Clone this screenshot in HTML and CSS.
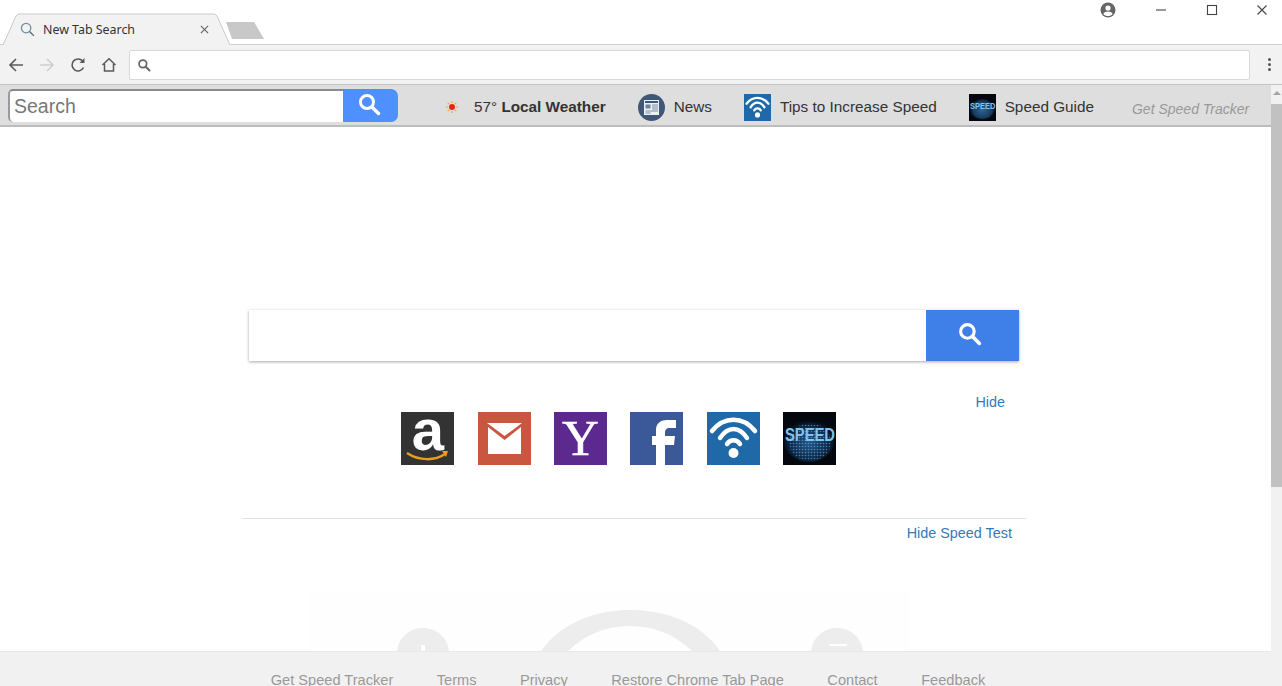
FILE: index.html
```html
<!DOCTYPE html>
<html lang="en">

<head>
  <meta charset="UTF-8">
  <meta name="viewport" content="width=device-width, initial-scale=1.0">
  <title>New Tab Search</title>
  <link rel="stylesheet" href="styles.css">
</head>

<body>
  <svg class="sprite" aria-hidden="true">
    <defs>
      <radialGradient id="speedglow" cx="50%" cy="55%" r="55%">
        <stop offset="0%" stop-color="#24598c" />
        <stop offset="65%" stop-color="#0f2c4d" />
        <stop offset="100%" stop-color="#03070f" />
      </radialGradient>
      <pattern id="speeddots" width="3" height="3" patternUnits="userSpaceOnUse">
        <circle cx="1.500" cy="1.500" r=".8" fill="#5fa3d8" />
      </pattern>
    </defs>
    <symbol id="lens" viewBox="0 0 24 24">
      <circle cx="10" cy="10" r="6.500" fill="none" stroke="currentColor" stroke-width="3" />
      <path d="M15 15l6.500 6.500" fill="none" stroke="currentColor" stroke-width="3.400" stroke-linecap="round" />
    </symbol>
    <symbol id="wifi" viewBox="0 0 53 53">
      <rect width="53" height="53" fill="#1f69a9" />
      <g fill="none" stroke="#fff" stroke-width="4.500" stroke-linecap="round">
        <path d="M5 19C17 4 36 4 48 19" />
        <path d="M13 26C21 14 32 14 40 26" />
        <path d="M20 32C23 27 30 27 33 32" />
      </g>
      <circle cx="26.500" cy="41" r="5" fill="#fff" />
    </symbol>
  </svg>

  <div class="tabstrip">
    <div class="tab">
      <svg class="tab-shape" viewBox="0 0 227 32" preserveAspectRatio="none">
        <path d="M0 32L13 3Q14 1 17 1H210Q213 1 214 3L227 32" fill="#f2f2f2" stroke="#c9c9c9" />
      </svg>
      <svg class="tab-lens" viewBox="0 0 16 16">
        <circle cx="6.500" cy="6.500" r="5" fill="none" stroke="#6d8fa6" stroke-width="1.400" />
        <path d="M10.200 10.200l4.600 4.600" stroke="#666" stroke-width="1.500" />
      </svg>
      <span class="tab-title">New Tab Search</span>
      <svg class="tab-close" viewBox="0 0 10 10">
        <path d="M1 1l8 8M9 1l-8 8" stroke="#666" stroke-width="1.300" />
      </svg>
    </div>
    <div class="newtab"></div>
    <div class="window-controls">
      <svg class="profile" viewBox="0 0 16 16">
        <circle cx="8" cy="8" r="7.500" fill="#666" />
        <circle cx="8" cy="6" r="2.600" fill="#fff" />
        <path d="M3.300 12c1-2 2.800-2.600 4.700-2.600s3.700.6 4.700 2.600C11.500 13.400 9.800 14 8 14s-3.500-.6-4.700-2z" fill="#fff" />
      </svg>
      <svg class="win-button" viewBox="0 0 12 12"><path d="M1 6h10" stroke="#555" stroke-width="1.200" /></svg>
      <svg class="win-button" viewBox="0 0 12 12"><rect x="1.500" y="1.500" width="9" height="9" fill="none" stroke="#444" stroke-width="1.100" /></svg>
      <svg class="win-button" viewBox="0 0 12 12"><path d="M1.500 1.500l9 9M10.500 1.500l-9 9" stroke="#444" stroke-width="1.100" /></svg>
    </div>
  </div>

  <div class="toolbar">
    <div class="nav-buttons">
      <svg class="nav-icon" viewBox="0 0 16 16"><path d="M15 8H2M8 2L2 8l6 6" fill="none" stroke="#5a5a5a" stroke-width="1.600" /></svg>
      <svg class="nav-icon" viewBox="0 0 16 16"><path d="M1 8h13M8 2l6 6-6 6" fill="none" stroke="#cfcfcf" stroke-width="1.600" /></svg>
      <svg class="nav-icon" viewBox="0 0 16 16"><path d="M13.500 10.500A6 6 0 1 1 13 4.500" fill="none" stroke="#5a5a5a" stroke-width="1.600" /><path d="M14.500 1v5h-5z" fill="#5a5a5a" /></svg>
      <svg class="nav-icon" viewBox="0 0 16 16"><path d="M1.500 8L8 1.800 14.500 8M3.500 7v7h9V7" fill="none" stroke="#5a5a5a" stroke-width="1.500" /></svg>
    </div>
    <div class="omnibox">
      <svg class="omni-lens" viewBox="0 0 24 24"><use href="#lens" /></svg>
    </div>
    <div class="menu-dots"><i></i><i></i><i></i></div>
  </div>

  <div class="viewport">
    <div class="page">
      <div class="extbar">
        <form class="ext-search">
          <input class="ext-input" type="text" placeholder="Search">
          <button class="ext-go" type="button"><svg viewBox="0 0 24 24"><use href="#lens" /></svg></button>
        </form>
        <div class="ext-links">
          <span class="ext-link weather">
            <svg class="sun" viewBox="0 0 12 12">
              <circle cx="6" cy="6" r="3" fill="#e8241a" />
              <path d="M6 0v2M6 10v2M0 6h2M10 6h2M1.800 1.800l1.400 1.400M8.800 8.800l1.400 1.400M1.800 10.200l1.400-1.400M8.800 3.200l1.400-1.400" stroke="#f5a623" stroke-width="1.200" />
            </svg>
            <span>57° <b>Local Weather</b></span>
          </span>
          <span class="ext-link">
            <svg class="ext-icon" viewBox="0 0 27 27">
              <circle cx="13.500" cy="13.500" r="13.500" fill="#3f5877" />
              <rect x="6" y="6" width="15" height="15" fill="#eef1f4" />
              <rect x="7" y="7" width="13" height="2" fill="#3f5877" />
              <rect x="7.500" y="10.500" width="5" height="4" fill="#6f8198" />
              <path d="M14 11h6M14 13h6M14 15h6M7.500 17h12.500M7.500 19h5" stroke="#7d8da2" />
            </svg>
            <span>News</span>
          </span>
          <span class="ext-link">
            <svg class="ext-icon" viewBox="0 0 53 53"><use href="#wifi" /></svg>
            <span>Tips to Increase Speed</span>
          </span>
          <span class="ext-link">
            <svg class="ext-icon" viewBox="0 0 53 53">
              <rect width="53" height="53" fill="#04070d" />
              <ellipse cx="26" cy="29" rx="25" ry="21" fill="url(#speedglow)" />
              <ellipse cx="27" cy="30" rx="21" ry="19" fill="url(#speeddots)" opacity=".7" />
              <text x="2" y="29" textLength="50" lengthAdjust="spacingAndGlyphs" class="speed-word">SPEED</text>
            </svg>
            <span>Speed Guide</span>
          </span>
        </div>
        <span class="get-tracker">Get Speed Tracker</span>
      </div>

      <div class="main">
        <div class="center">
          <form class="big-search">
            <input class="big-input" type="text">
            <button class="big-go" type="button"><svg viewBox="0 0 24 24"><use href="#lens" /></svg></button>
          </form>

          <a class="hide-link" href="#">Hide</a>
          <div class="tiles">
            <svg class="tile" viewBox="0 0 53 53">
              <rect width="53" height="53" fill="#333" />
              <text x="27" y="38" text-anchor="middle" class="tile-a">a</text>
              <path d="M6 41c12 8 28 8 38 1" fill="none" stroke="#eb9d1f" stroke-width="2.500" />
              <path d="M41 39l6 0-2 6z" fill="#eb9d1f" />
            </svg>
            <svg class="tile" viewBox="0 0 53 53">
              <rect width="53" height="53" fill="#c9563f" />
              <path d="M10 15v27h33V15L26.500 28z" fill="#fff" />
              <path d="M9 11h35L26.500 24z" fill="#fff" />
            </svg>
            <svg class="tile" viewBox="0 0 53 53">
              <rect width="53" height="53" fill="#5c2a8e" />
              <text x="26.500" y="43" text-anchor="middle" class="tile-y">Y</text>
            </svg>
            <svg class="tile" viewBox="0 0 53 53">
              <rect width="53" height="53" fill="#3b5998" />
              <path d="M26 53V33H22V24H26V18C26 11 31 8 37 8H46V16H40C36 16 35 18 35 21V24H45L44 33H35V53Z" fill="#fff" />
            </svg>
            <svg class="tile" viewBox="0 0 53 53"><use href="#wifi" /></svg>
            <svg class="tile" viewBox="0 0 53 53">
              <rect width="53" height="53" fill="#04070d" />
              <ellipse cx="26" cy="29" rx="25" ry="21" fill="url(#speedglow)" />
              <ellipse cx="27" cy="30" rx="21" ry="19" fill="url(#speeddots)" opacity=".7" />
              <text x="2" y="29" textLength="50" lengthAdjust="spacingAndGlyphs" class="speed-word">SPEED</text>
            </svg>
          </div>

          <div class="speedtest">
            <a class="hide-speed" href="#">Hide Speed Test</a>
            <svg class="gauge" viewBox="0 0 600 61">
              <rect width="600" height="61" fill="#fefefe" />
              <path d="M232 61C255 30 290 20 321 20S390 30 411 61H383C365 44 345 36 321 36S277 44 259 61Z" fill="#ededed" />
              <path d="M88 61C90 46 102 38 114 38S138 46 140 61Z" fill="#ededed" />
              <rect x="112" y="55" width="4" height="6" fill="#fefefe" />
              <path d="M502 61C504 46 516 38 528 38S552 46 554 61Z" fill="#ededed" />
              <rect x="520" y="54" width="18" height="2" fill="#fefefe" />
            </svg>
          </div>
        </div>
      </div>

      <div class="footer">
        <a href="#">Get Speed Tracker</a>
        <a href="#">Terms</a>
        <a href="#">Privacy</a>
        <a href="#">Restore Chrome Tab Page</a>
        <a href="#">Contact</a>
        <a href="#">Feedback</a>
      </div>
    </div>

    <div class="scrollbar">
      <div class="scroll-arrow"></div>
      <div class="scroll-thumb"></div>
    </div>
  </div>
</body>

</html>
```

FILE: styles.css
```css
* {
  box-sizing: border-box;
}

html,
body {
  height: 100%;
}

body {
  margin: 0;
  font-family: "Liberation Sans", Arial, sans-serif;
  background-color: white;
  color: #333;
  display: flex;
  flex-direction: column;
  overflow: hidden;
}

a {
  text-decoration: none;
}

.sprite {
  position: absolute;
  width: 0;
  height: 0;
}

.speed-word {
  font-family: "Liberation Sans", sans-serif;
  font-size: 18px;
  font-weight: 700;
  fill: #7fc3ec;
}

.tile-a {
  font-family: "Liberation Sans", sans-serif;
  font-size: 58px;
  font-weight: 700;
  fill: #fff;
}

.tile-y {
  font-family: "Liberation Serif", serif;
  font-size: 51px;
  fill: #fff;
  stroke: #fff;
  stroke-width: 0.6px;
}

/* tab strip */
.tabstrip {
  height: 45px;
  flex: none;
  display: flex;
  align-items: flex-end;
  padding-left: 3px;
  border-bottom: 1px solid #cfcfcf;
}

.tab {
  position: relative;
  width: 227px;
  height: 32px;
  margin-bottom: -1px;
  display: flex;
  align-items: center;
  padding: 0 21px 0 17px;
}

.tab-shape {
  position: absolute;
  top: 0;
  left: 0;
  width: 100%;
  height: 100%;
}

.tab-lens {
  position: relative;
  width: 15px;
  height: 15px;
  flex: none;
}

.tab-title {
  position: relative;
  flex: 1;
  margin-left: 8px;
  font-family: "Noto Sans", sans-serif;
  font-size: 12.400px;
  color: #333;
}

.tab-close {
  position: relative;
  width: 9px;
  height: 9px;
}

.newtab {
  width: 38px;
  height: 17px;
  margin: 0 0 5px -4px;
  background-color: #c8c8c8;
  clip-path: polygon(0 0, 74% 0, 100% 100%, 16% 100%);
}

.window-controls {
  align-self: flex-start;
  margin-left: auto;
  display: flex;
  align-items: center;
  gap: 38.500px;
  height: 20px;
  padding-right: 14px;
}

.profile {
  width: 16px;
  height: 16px;
  margin-right: 1px;
}

.win-button {
  width: 12px;
  height: 12px;
}

/* address bar */
.toolbar {
  height: 40px;
  flex: none;
  display: flex;
  align-items: center;
  background-color: #f2f2f2;
  padding-left: 8px;
  border-bottom: 1px solid #c4c4c4;
}

.nav-buttons {
  display: flex;
  gap: 15px;
  width: 121px;
}

.nav-icon {
  width: 16px;
  height: 16px;
}

.omnibox {
  width: 1121px;
  height: 30px;
  display: flex;
  align-items: center;
  padding-left: 7px;
  background-color: white;
  border: 1px solid #d9d9d9;
  border-radius: 2px;
}

.omni-lens {
  width: 14px;
  height: 14px;
  color: #666;
}

.menu-dots {
  display: flex;
  flex-direction: column;
  gap: 2px;
  margin-left: 18px;
}

.menu-dots i {
  width: 3px;
  height: 3px;
  border-radius: 50%;
  background-color: #555;
}

/* page */
.viewport {
  flex: 1;
  min-height: 0;
  display: flex;
}

.page {
  flex: 1;
  min-width: 0;
  display: flex;
  flex-direction: column;
}

.extbar {
  height: 42px;
  flex: none;
  display: flex;
  align-items: center;
  background-color: #dedede;
  padding-left: 8px;
  border-bottom: 2px solid #bdbdbd;
}

.ext-search {
  display: flex;
  width: 390px;
  height: 33px;
  margin: 0;
}

.ext-input {
  width: 335px;
  height: 33px;
  padding: 0 0 0 4px;
  font-family: "Liberation Sans", Arial, sans-serif;
  font-size: 19.500px;
  border: none;
  border-top: 2px solid #8a8a8a;
  border-left: 2px solid #9a9a9a;
  border-radius: 5px 0 0 5px;
  background-color: white;
}

.ext-input::placeholder {
  color: #777;
  opacity: 1;
}

.ext-go {
  width: 55px;
  height: 33px;
  padding: 0 4px 0 0;
  border: none;
  border-radius: 0 7px 7px 0;
  background-color: #4d90fe;
  color: white;
}

.ext-go svg {
  width: 24px;
  height: 24px;
  display: block;
  margin: 0 auto 2px;
}

.ext-links {
  display: flex;
  align-items: center;
  margin-left: 48px;
  margin-top: 4px;
  gap: 32px;
  font-size: 15.300px;
  color: #333;
}

.ext-link {
  display: flex;
  align-items: center;
  gap: 9px;
}

.weather {
  gap: 16px;
}

.sun {
  width: 12px;
  height: 12px;
}

.ext-icon {
  width: 27px;
  height: 27px;
}

.get-tracker {
  margin-left: 38px;
  margin-top: 7px;
  font-size: 14px;
  font-style: italic;
  color: #999;
}

.main {
  flex: 1;
  min-height: 0;
  overflow: hidden;
  display: flex;
  justify-content: center;
}

.center {
  width: 784px;
  margin-left: -3px;
  padding-top: 183px;
}

.big-search {
  display: flex;
  width: 770px;
  height: 51px;
  margin: 0 0 0 7px;
  box-shadow: 0 1px 3px rgba(0, 0, 0, 0.35);
}

.big-input {
  flex: 1;
  border: none;
  background-color: white;
}

.big-go {
  width: 93px;
  padding: 0 7px 0 0;
  border: none;
  background-color: #3f7fe8;
  color: white;
}

.big-go svg {
  width: 25px;
  height: 25px;
  display: block;
  margin: 0 auto 4px;
}

.hide-link {
  display: block;
  margin: 32px 21px 0 0;
  height: 18px;
  font-size: 14.400px;
  line-height: 18px;
  text-align: right;
  color: #337ab7;
}

.tiles {
  display: flex;
  gap: 23.400px;
  margin: 1px 0 0 159.300px;
}

.tile {
  width: 53px;
  height: 53px;
}

.speedtest {
  margin-top: 53px;
  border-top: 1px solid #e3e3e3;
  padding-top: 6px;
}

.hide-speed {
  display: block;
  padding-right: 14px;
  font-size: 14.400px;
  line-height: 16px;
  text-align: right;
  color: #337ab7;
}

.gauge {
  display: block;
  width: 600px;
  height: 61px;
  margin: 49px 0 0 67px;
}

.footer {
  height: 35px;
  flex: none;
  overflow: hidden;
  display: flex;
  justify-content: center;
  gap: 43.500px;
  padding: 20px 15px 0 0;
  background-color: #f1f1f1;
  border-top: 1px solid #e9e9e9;
  font-size: 14.600px;
  line-height: 16px;
}

.footer a {
  color: #999;
}

.scrollbar {
  width: 11px;
  flex: none;
  background-color: #f1f1f1;
  padding-top: 6px;
}

.scroll-arrow {
  width: 0;
  height: 0;
  margin: 0 auto 9px;
  border-left: 4px solid transparent;
  border-right: 4px solid transparent;
  border-bottom: 4px solid #a3a3a3;
}

.scroll-thumb {
  height: 383px;
  background-color: #c1c1c1;
}
```
